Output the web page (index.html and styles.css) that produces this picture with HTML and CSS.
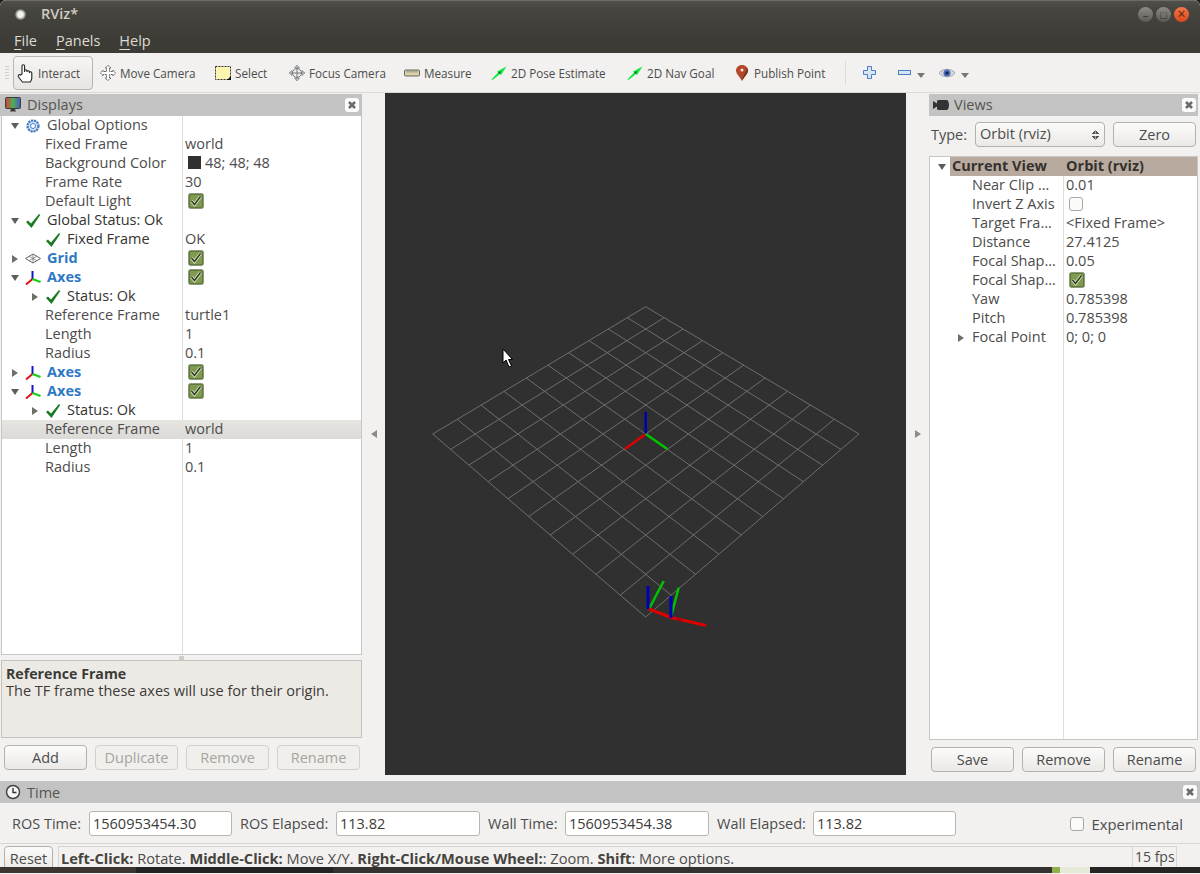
FILE: index.html
```html
<!DOCTYPE html>
<html lang="en">

<head>
    <meta charset="utf-8">
    <title>RViz*</title>
    <link rel="stylesheet" href="styles.css">
</head>

<body>
    <svg class="sprite" width="0" height="0">
        <symbol id="check" viewBox="0 0 16 16">
            <rect x="0.500" y="0.500" width="15" height="15" rx="2" fill="#5f7a3a" stroke="#8f9a7c" />
            <rect x="2" y="2" width="12" height="12" rx="1" fill="#7f9b50" />
            <path d="M3.500 8l3 3.500 6-8" fill="none" stroke="#e6edd4" stroke-width="3" />
            <path d="M3.500 8l3 3.500 6-8" fill="none" stroke="#2f3b22" stroke-width="1.600" />
        </symbol>
        <symbol id="ok" viewBox="0 0 16 16">
            <path d="M1 9l2-1.500 3 3L14 1l1.200 1L6.500 15z" fill="#1d7a24" />
        </symbol>
        <symbol id="axes" viewBox="0 0 16 16">
            <path d="M7.500 9V1" stroke="#1414c8" stroke-width="2" />
            <path d="M7.500 9L1 14.500" stroke="#e01010" stroke-width="2" />
            <path d="M7.500 9L15.500 12" stroke="#10d010" stroke-width="2" />
        </symbol>
        <symbol id="close" viewBox="0 0 14 14">
            <rect width="14" height="14" rx="3" fill="#fbfbfa" />
            <path d="M4 4l6 6M10 4l-6 6" stroke="#6a6a6a" stroke-width="2.600" />
        </symbol>
        <symbol id="twist-open" viewBox="0 0 10 10">
            <path d="M1 2h8L5 8z" fill="#5d5d5a" />
        </symbol>
        <symbol id="twist-closed" viewBox="0 0 10 10">
            <path d="M2 1v8l6-4z" fill="#6e6e6a" />
        </symbol>
        <symbol id="green-arrow" viewBox="0 0 16 14">
            <path d="M0.500 13.500L7 6.500 6 5.500 15.500 0.500 10 9 9 8 1.500 14z" fill="#10e840" />
            <path d="M7 6.500l2 1.500 1-3z" fill="#14602a" />
        </symbol>
        <symbol id="drop" viewBox="0 0 10 10">
            <path d="M1 2h8L5 7z" fill="#777" />
        </symbol>
    </svg>

    <div class="window">
        <header class="titlebar">
            <div class="title-row">
                <span class="app-dot"></span>
                <span class="app-name">RViz*</span>
                <div class="win-buttons">
                    <span class="win-btn">&#8211;</span>
                    <span class="win-btn">&#9633;</span>
                    <span class="win-btn win-close">&#215;</span>
                </div>
            </div>
            <nav class="menubar">
                <span><u>F</u>ile</span>
                <span><u>P</u>anels</span>
                <span><u>H</u>elp</span>
            </nav>
        </header>

        <div class="toolbar">
            <span class="grip"></span>
            <div class="tool tool-active">
                <svg class="tool-icon" viewBox="0 0 18 20" width="18" height="20">
                    <path d="M5 11V3a1.300 1.300 0 0 1 2.600 0v6-1a1.200 1.200 0 0 1 2.400 0v1a1.200 1.200 0 0 1 2.400 0v1a1.200 1.200 0 0 1 2.400 0v5c0 2-.6 3-1.600 4H5.500L1.500 14c-1-1.500.5-3 2-2z" fill="#fff" stroke="#222" stroke-width="1.100" />
                </svg>
                Interact
            </div>
            <div class="tool">
                <svg class="tool-icon" viewBox="0 0 16 16" width="16" height="16">
                    <path d="M8 .5L11 3H9.500v3.500H13V5l2.500 3L13 11V9.500H9.500V13H11l-3 2.500L5 13h1.500V9.500H3V11L.5 8 3 5v1.500h3.500V3H5z" fill="#fff" stroke="#666" stroke-width="1" stroke-dasharray="2 .6" />
                </svg>
                Move Camera
            </div>
            <div class="tool">
                <svg class="tool-icon" viewBox="0 0 16 16" width="16" height="16">
                    <rect x="0.500" y="1.500" width="15" height="13" fill="#fbf5b0" stroke="#333" stroke-dasharray="2 1" />
                    <path d="M16 11v4h-4z" fill="#111" />
                </svg>
                Select
            </div>
            <div class="tool">
                <svg class="tool-icon" viewBox="0 0 16 16" width="16" height="16">
                    <path d="M8 0l2.500 3h-5zM8 16l-2.500-3h5zM0 8l3-2.500v5zM16 8l-3 2.500v-5z" fill="#bbb" stroke="#777" stroke-width=".6" />
                    <circle cx="8" cy="8" r="4.500" fill="#eee" stroke="#777" />
                    <path d="M8 3v10M3 8h10" stroke="#777" />
                </svg>
                Focus Camera
            </div>
            <div class="tool">
                <svg class="tool-icon" viewBox="0 0 16 16" width="16" height="16">
                    <rect x="0.500" y="5" width="15" height="6" rx="1" fill="#d9d3a6" stroke="#666" />
                    <path d="M3 5.500v2M5 5.500v2M7 5.500v2M9 5.500v2M11 5.500v2M13 5.500v2" stroke="#666" stroke-width=".7" />
                </svg>
                Measure
            </div>
            <div class="tool">
                <svg class="tool-icon" width="16" height="14"><use href="#green-arrow" /></svg>
                2D Pose Estimate
            </div>
            <div class="tool">
                <svg class="tool-icon" width="16" height="14"><use href="#green-arrow" /></svg>
                2D Nav Goal
            </div>
            <div class="tool tool-pin">
                <svg class="tool-icon" viewBox="0 0 12 16" width="12" height="16">
                    <path d="M6 0C2.500 0 0 2.500 0 5.500 0 9 4 12 6 16c2-4 6-7 6-10.500C12 2.500 9.500 0 6 0z" fill="#b4482a" />
                    <path d="M6 16c2-4 6-7 6-10.500 0-1-.3-2-.8-2.800C10 7 7 10 6 16z" fill="#6f3a22" />
                    <circle cx="6" cy="5" r="1.500" fill="#f3e6da" />
                </svg>
                Publish Point
            </div>
            <span class="tool-sep"></span>
            <div class="tool tool-small">
                <svg viewBox="0 0 13 13" width="13" height="13">
                    <path d="M4.500.5h4v4h4v4h-4v4h-4v-4h-4v-4h4z" fill="#d7e4f5" stroke="#4a7fc4" />
                </svg>
            </div>
            <div class="tool tool-small">
                <svg viewBox="0 0 13 13" width="13" height="13">
                    <rect x="0.500" y="4.500" width="12" height="4" fill="#d7e4f5" stroke="#4a7fc4" />
                </svg>
                <svg class="drop" width="10" height="10"><use href="#drop" /></svg>
            </div>
            <div class="tool tool-small">
                <svg viewBox="0 0 16 12" width="16" height="12">
                    <path d="M0 6c3-5 13-5 16 0-3 5-13 5-16 0z" fill="#d5d8de" stroke="#8d9098" stroke-width=".7" />
                    <circle cx="8" cy="6" r="3.500" fill="#4a6db5" />
                    <circle cx="8" cy="6" r="1.500" fill="#10204a" />
                </svg>
                <svg class="drop" width="10" height="10"><use href="#drop" /></svg>
            </div>
        </div>

        <main class="workspace">
            <section class="panel panel-displays">
                <div class="panel-head">
                    <svg class="head-icon" viewBox="0 0 16 16" width="16" height="16">
                        <defs>
                            <linearGradient id="screen" x1="0" x2="1" y1="0" y2="0">
                                <stop offset="0" stop-color="#d83a3a" />
                                <stop offset=".5" stop-color="#4fb04f" />
                                <stop offset="1" stop-color="#4a55c8" />
                            </linearGradient>
                        </defs>
                        <rect x="0.500" y="0.500" width="15" height="11" rx="1" fill="url(#screen)" stroke="#3c3c3c" />
                        <path d="M6 12h4l1 2.500H5z" fill="#3c3c3c" />
                    </svg>
                    <span>Displays</span>
                    <svg class="head-close" width="14" height="14"><use href="#close" /></svg>
                </div>

                <div class="tree tree-displays">
                    <div class="row d0"><span class="tw"><svg width="10" height="10"><use href="#twist-open" /></svg></span>
                        <svg class="ic" viewBox="0 0 16 16" width="16" height="16">
                            <circle cx="8" cy="8" r="5.500" fill="#dbe7f7" stroke="#3f78c8" stroke-width="2.200" stroke-dasharray="2.200 .7" />
                            <circle cx="8" cy="8" r="2.500" fill="#fff" stroke="#3f78c8" />
                        </svg>
                        <span class="name">Global Options</span>
                    </div>
                    <div class="row prop"><span class="name">Fixed Frame</span><span class="val">world</span></div>
                    <div class="row prop"><span class="name">Background Color</span><span class="val val-color"><i class="swatch"></i>48; 48; 48</span></div>
                    <div class="row prop"><span class="name">Frame Rate</span><span class="val">30</span></div>
                    <div class="row prop"><span class="name">Default Light</span><span class="val"><svg class="cb" width="16" height="16"><use href="#check" /></svg></span></div>
                    <div class="row d0"><span class="tw"><svg width="10" height="10"><use href="#twist-open" /></svg></span>
                        <svg class="ic" width="16" height="16"><use href="#ok" /></svg>
                        <span class="name dark">Global Status: Ok</span>
                    </div>
                    <div class="row d1"><span class="tw"></span>
                        <svg class="ic" width="16" height="16"><use href="#ok" /></svg>
                        <span class="name dark">Fixed Frame</span><span class="val">OK</span>
                    </div>
                    <div class="row d0"><span class="tw"><svg width="10" height="10"><use href="#twist-closed" /></svg></span>
                        <svg class="ic" viewBox="0 0 16 16" width="16" height="16">
                            <path d="M.5 7.500L8 3l7.500 4.500L8 12z" fill="none" stroke="#666" />
                            <path d="M4.200 5.300l7.500 4.400M11.800 5.300L4.200 9.700M8 3v9" stroke="#666" stroke-width=".7" />
                        </svg>
                        <span class="name blue">Grid</span><span class="val"><svg class="cb" width="16" height="16"><use href="#check" /></svg></span>
                    </div>
                    <div class="row d0"><span class="tw"><svg width="10" height="10"><use href="#twist-open" /></svg></span>
                        <svg class="ic" width="16" height="16"><use href="#axes" /></svg>
                        <span class="name blue">Axes</span><span class="val"><svg class="cb" width="16" height="16"><use href="#check" /></svg></span>
                    </div>
                    <div class="row d1"><span class="tw"><svg width="10" height="10"><use href="#twist-closed" /></svg></span>
                        <svg class="ic" width="16" height="16"><use href="#ok" /></svg>
                        <span class="name dark">Status: Ok</span>
                    </div>
                    <div class="row prop"><span class="name">Reference Frame</span><span class="val">turtle1</span></div>
                    <div class="row prop"><span class="name">Length</span><span class="val">1</span></div>
                    <div class="row prop"><span class="name">Radius</span><span class="val">0.1</span></div>
                    <div class="row d0"><span class="tw"><svg width="10" height="10"><use href="#twist-closed" /></svg></span>
                        <svg class="ic" width="16" height="16"><use href="#axes" /></svg>
                        <span class="name blue">Axes</span><span class="val"><svg class="cb" width="16" height="16"><use href="#check" /></svg></span>
                    </div>
                    <div class="row d0"><span class="tw"><svg width="10" height="10"><use href="#twist-open" /></svg></span>
                        <svg class="ic" width="16" height="16"><use href="#axes" /></svg>
                        <span class="name blue">Axes</span><span class="val"><svg class="cb" width="16" height="16"><use href="#check" /></svg></span>
                    </div>
                    <div class="row d1"><span class="tw"><svg width="10" height="10"><use href="#twist-closed" /></svg></span>
                        <svg class="ic" width="16" height="16"><use href="#ok" /></svg>
                        <span class="name dark">Status: Ok</span>
                    </div>
                    <div class="row prop selected"><span class="name">Reference Frame</span><span class="val">world</span></div>
                    <div class="row prop"><span class="name">Length</span><span class="val">1</span></div>
                    <div class="row prop"><span class="name">Radius</span><span class="val">0.1</span></div>
                </div>

                <div class="sash"></div>

                <div class="descr">
                    <b>Reference Frame</b>
                    <p>The TF frame these axes will use for their origin.</p>
                </div>

                <div class="btn-row btn-row-left">
                    <button class="btn">Add</button>
                    <button class="btn" disabled>Duplicate</button>
                    <button class="btn" disabled>Remove</button>
                    <button class="btn" disabled>Rename</button>
                </div>
            </section>

            <div class="splitter"><i class="arrow-left"></i></div>

            <section class="viewport">
                <svg class="scene" viewBox="385 93 521 682" width="521" height="682">
                    <!-- grid, 10 x 10 cells in perspective -->
                    <path class="grid" d="M645.700 306.700L859 434 645.700 617 432.700 434z
                        M664.100 317.700L450.500 449.300M683 329L468.900 465.100M702.500 340.600L488.100 481.600M722.700 352.700L508 498.700M743.600 365.100L528.700 516.500
                        M765.100 378L550.200 535M787.400 391.300L572.600 554.200M810.400 405L596 574.300M834.300 419.200L620.300 595.200
                        M627.300 317.700L840.900 449.300M608.400 329L822.500 465.100M588.900 340.600L803.300 481.600M568.700 352.700L783.400 498.700M547.800 365.100L762.700 516.500
                        M526.300 378L741.200 535M504 391.300L718.800 554.200M481 405L695.400 574.300M457.100 419.200L671.100 595.200" />
                    <!-- fixed frame axes -->
                    <path class="ax ax-z" d="M645.700 434V412" />
                    <path class="ax ax-x" d="M645.700 434L625 449" />
                    <path class="ax ax-y" d="M645.700 434L667.300 449" />
                    <!-- turtle axes -->
                    <path class="ax ax-y" d="M649 609L663.700 581" />
                    <path class="ax ax-z ax-fat" d="M648 609V586" />
                    <path class="ax ax-y" d="M671 617L678.700 587.500" />
                    <path class="ax ax-x ax-fat" d="M649 609L671 617.500 680 619.500 706 625.500" />
                    <path class="ax ax-z ax-fat" d="M671 618V596" />
                    <path d="M676 618l5 1-1 4z" fill="#8a1010" />
                    <!-- mouse pointer -->
                    <path d="M503 349v14l3-3 3 7 2.500-1-3-6.500h4z" fill="#fff" stroke="#000" stroke-width="1" />
                </svg>
            </section>

            <div class="splitter"><i class="arrow-right"></i></div>

            <section class="panel panel-views">
                <div class="panel-head">
                    <svg class="head-icon" viewBox="0 0 16 10" width="16" height="10">
                        <path d="M0 1l4 2.500V1.500c0-.8.700-1.500 1.500-1.500h8C15 0 16 2 16 5s-1 5-2.500 5h-8C4.700 10 4 9.300 4 8.500V6.500L0 9z" fill="#333" />
                    </svg>
                    <span>Views</span>
                    <svg class="head-close" width="14" height="14"><use href="#close" /></svg>
                </div>
                <div class="type-row">
                    <label>Type:</label>
                    <div class="combo">Orbit (rviz)<i class="updown"></i></div>
                    <button class="btn">Zero</button>
                </div>
                <div class="tree tree-views">
                    <div class="row current"><span class="tw"><svg width="10" height="10"><use href="#twist-open" /></svg></span>
                        <span class="name">Current View</span><span class="val">Orbit (rviz)</span>
                    </div>
                    <div class="row prop"><span class="name">Near Clip &#8230;</span><span class="val">0.01</span></div>
                    <div class="row prop"><span class="name">Invert Z Axis</span><span class="val"><i class="box"></i></span></div>
                    <div class="row prop"><span class="name">Target Fra&#8230;</span><span class="val">&lt;Fixed Frame&gt;</span></div>
                    <div class="row prop"><span class="name">Distance</span><span class="val">27.4125</span></div>
                    <div class="row prop"><span class="name">Focal Shap&#8230;</span><span class="val">0.05</span></div>
                    <div class="row prop"><span class="name">Focal Shap&#8230;</span><span class="val"><svg class="cb" width="16" height="16"><use href="#check" /></svg></span></div>
                    <div class="row prop"><span class="name">Yaw</span><span class="val">0.785398</span></div>
                    <div class="row prop"><span class="name">Pitch</span><span class="val">0.785398</span></div>
                    <div class="row prop prop-twist"><span class="tw"><svg width="10" height="10"><use href="#twist-closed" /></svg></span><span class="name">Focal Point</span><span class="val">0; 0; 0</span></div>
                </div>
                <div class="btn-row btn-row-right">
                    <button class="btn">Save</button>
                    <button class="btn">Remove</button>
                    <button class="btn">Rename</button>
                </div>
            </section>
        </main>

        <section class="time-panel">
            <div class="panel-head time-head">
                <svg class="head-icon" viewBox="0 0 16 16" width="16" height="16">
                    <circle cx="8" cy="8" r="6.500" fill="#f6f6f6" stroke="#444" stroke-width="1.500" />
                    <path d="M8 4v4.500h3.500" fill="none" stroke="#333" stroke-width="1.400" />
                </svg>
                <span>Time</span>
                <svg class="head-close" width="14" height="14"><use href="#close" /></svg>
            </div>
            <div class="time-row">
                <label>ROS Time:</label>
                <div class="field">1560953454.30</div>
                <label>ROS Elapsed:</label>
                <div class="field">113.82</div>
                <label>Wall Time:</label>
                <div class="field">1560953454.38</div>
                <label>Wall Elapsed:</label>
                <div class="field">113.82</div>
                <div class="experimental"><i class="box"></i>Experimental</div>
            </div>
        </section>

        <footer class="statusbar">
            <button class="btn btn-reset">Reset</button>
            <div class="status-text"><b>Left-Click:</b> Rotate. <b>Middle-Click:</b> Move X/Y. <b>Right-Click/Mouse Wheel:</b>: Zoom. <b>Shift</b>: More options.</div>
            <div class="fps">15 fps</div>
        </footer>

        <div class="desktop-strip">
            <span class="strip-a"></span>
            <span class="strip-b"></span>
            <span class="strip-c"></span>
            <span class="strip-d"></span>
        </div>
    </div>
</body>

</html>
```

FILE: styles.css
```css
* {
    box-sizing: border-box;
}

body {
    margin: 0;
    background-color: #1c1c1a;
    font-family: "Open Sans", "Noto Sans", sans-serif;
    font-size: 14.500px;
    color: #4c4c4c;
}

.sprite {
    position: absolute;
}

.window {
    display: flex;
    flex-direction: column;
    width: 1200px;
    height: 874px;
    overflow: hidden;
    background-color: #f2f1ef;
    border-radius: 6px 6px 0 0;
}

/* title and menu */

.titlebar {
    height: 53px;
    background: linear-gradient(#514f4a 0, #47453f 8px, #3c3b36 40px);
    border-top: 1px solid #6d6b64;
    color: #dfdbd2;
}

.title-row {
    display: flex;
    align-items: center;
    height: 26px;
    padding-left: 15px;
}

.app-dot {
    width: 11px;
    height: 11px;
    border-radius: 50%;
    background: radial-gradient(#f2f2f0 35%, #55544f 75%);
}

.app-name {
    margin-left: 15px;
    margin-bottom: 2px;
    font-size: 14.500px;
    font-weight: 600;
    color: #d0ccc4;
}

.win-buttons {
    display: flex;
    gap: 3px;
    margin-left: auto;
    margin-right: 11px;
}

.win-btn {
    display: flex;
    align-items: center;
    justify-content: center;
    width: 15px;
    height: 15px;
    border-radius: 50%;
    background: linear-gradient(#8c8b85, #5b5a55);
    font-size: 11px;
    line-height: 1;
    color: #35342f;
}

.win-close {
    background: linear-gradient(#f2794a, #d9481c);
    color: #5a2410;
    font-size: 14px;
}

.menubar {
    display: flex;
    gap: 19px;
    height: 26px;
    padding-left: 14px;
    line-height: 28px;
    font-size: 14.500px;
}

.menubar u {
    text-underline-offset: 3px;
}

/* toolbar */

.toolbar {
    display: grid;
    grid-template-columns: 13px 87px 115px 74px 115px 87px 136px 109px 109px 18px 35px 41px 50px;
    align-items: center;
    height: 40px;
    background-color: #f2f1ef;
    border-bottom: 1px solid #dbd9d5;
    font-size: 11.700px;
}

.grip {
    width: 4px;
    height: 13px;
    margin-left: 5px;
    background: repeating-linear-gradient(#cfcdc9 0 1px, transparent 1px 3px);
}

.tool {
    display: flex;
    align-items: center;
    gap: 4px;
    height: 34px;
    white-space: nowrap;
}

.tool-active {
    width: 80px;
    padding-left: 3px;
    gap: 3px;
    background: linear-gradient(#f6f5f3, #e7e5e2);
    border: 1px solid #b8b5af;
    border-radius: 4px;
}

.tool-pin {
    gap: 6px;
}

.tool-small {
    gap: 5px;
}

.tool-sep {
    width: 1px;
    height: 24px;
    background-color: #dedcd8;
}

.drop {
    margin-top: 6px;
}

/* main row */

.workspace {
    display: flex;
    flex: none;
    height: 688px;
}

.panel {
    display: flex;
    flex-direction: column;
    flex: none;
    padding-top: 1px;
}

.panel-displays {
    width: 362px;
}

.panel-views {
    width: 269px;
}

.panel-head {
    display: flex;
    align-items: center;
    flex: none;
    height: 22px;
    padding-left: 5px;
    background-color: #c3c3c3;
    font-size: 14.500px;
    color: #55554f;
}

.panel-head span {
    margin-bottom: 2px;
}

.head-icon {
    margin-right: 6px;
}

.head-close {
    margin-left: auto;
    margin-right: 3px;
}

.panel-views .panel-head {
    padding-left: 4px;
}

.panel-views .head-icon {
    margin-right: 5px;
}

.panel-views .head-close {
    margin-right: 2px;
}

.tree {
    flex: none;
    background-color: #fff;
    border: 1px solid #c9c7c3;
    border-top: none;
}

.tree-displays {
    height: 539px;
    margin-left: 1px;
    background: linear-gradient(#dedede, #dedede) 180px 0 / 1px 100% no-repeat #fff;
}

.tree-views {
    height: 584px;
    background: linear-gradient(#dedede, #dedede) 133px 0 / 1px 100% no-repeat #fff;
    border-top: 1px solid #c9c7c3;
}

.row {
    position: relative;
    display: flex;
    align-items: center;
    height: 19px;
    white-space: nowrap;
}

.name,
.val {
    margin-bottom: 2px;
}

.tw {
    display: flex;
    align-items: center;
    justify-content: center;
    flex: none;
    width: 15px;
}

.ic {
    flex: none;
    margin: 0 6px 0 3px;
}

.d0 {
    padding-left: 5px;
}

.d1 {
    padding-left: 25px;
}

.prop {
    padding-left: 43px;
}

.tree-displays .val {
    position: absolute;
    left: 183px;
}

.dark {
    color: #33332f;
}

.blue {
    font-weight: 700;
    color: #2f78c5;
}

.selected {
    background: linear-gradient(#e7e5e2, #dcdad7);
}

.val-color {
    display: flex;
    align-items: center;
}

.swatch {
    width: 13px;
    height: 13px;
    margin: 0 4px 0 3px;
    background-color: #303030;
}

.cb {
    display: block;
    margin-left: 3px;
}

.box {
    display: block;
    width: 14px;
    height: 14px;
    background-color: #fbfbfa;
    border: 1px solid #a8a6a1;
    border-radius: 3px;
}

/* right tree */

.tree-views .prop {
    padding-left: 42px;
}

.tree-views .prop-twist {
    padding-left: 23px;
}

.prop-twist .tw {
    justify-content: flex-start;
    width: 19px;
    padding-left: 3px;
}

.tree-views .val {
    position: absolute;
    left: 136px;
}

.tree-views .box {
    margin-left: 3px;
}

.current {
    padding-left: 4px;
    background: linear-gradient(to right, #fff 20px, #b9aa9f 20px);
    font-weight: 700;
    color: #35322e;
}

.current .name {
    margin-left: 3px;
}

.current .val {
    font-weight: 700;
}

.sash {
    flex: none;
    height: 5px;
    margin-left: 1px;
    background: linear-gradient(#cfcdc9, #cfcdc9) 178px 1px / 5px 4px no-repeat;
}

.descr {
    flex: none;
    height: 78px;
    margin-left: 1px;
    padding: 4px 4px;
    background-color: #edeae5;
    border: 1px solid #c4c2bd;
    line-height: 17px;
    color: #3c3b37;
}

.descr b {
    font-size: 14.200px;
}

.descr p {
    margin: 0;
}

.btn-row {
    display: flex;
    flex: none;
}

.btn-row-left {
    gap: 8px;
    padding: 7px 0 0 4px;
}

.btn-row-right {
    gap: 8px;
    padding: 7px 0 0 2px;
}

.btn {
    width: 83px;
    height: 25px;
    padding: 0;
    background: linear-gradient(#fbfbfa, #ebe9e6);
    border: 1px solid #b4b1ab;
    border-radius: 4px;
    font-family: inherit;
    font-size: 14.500px;
    color: #4c4c4c;
}

.btn:disabled {
    background: #f0efec;
    border-color: #d2d0cb;
    color: #a5a4a0;
}

.splitter {
    display: flex;
    align-items: center;
    justify-content: center;
    flex: none;
    width: 23px;
    padding-bottom: 6px;
}

.arrow-left,
.arrow-right {
    width: 0;
    height: 0;
    border-top: 4px solid transparent;
    border-bottom: 4px solid transparent;
}

.arrow-left {
    border-right: 6px solid #8b8b88;
}

.arrow-right {
    border-left: 6px solid #8b8b88;
}

.viewport {
    flex: none;
    width: 521px;
    height: 682px;
    background-color: #303030;
}

.scene {
    display: block;
}

.grid {
    fill: none;
    stroke: #6e6e6e;
    stroke-width: 1;
}

.ax {
    fill: none;
    stroke-width: 2.500;
}

.ax-fat {
    stroke-width: 3;
}

.ax-x {
    stroke: #dc0000;
}

.ax-y {
    stroke: #00c400;
}

.ax-z {
    stroke: #0000b4;
}

.type-row {
    display: flex;
    align-items: center;
    flex: none;
    height: 25px;
    margin: 6px 0 9px;
}

.type-row label {
    width: 46px;
    padding-left: 2px;
}

.combo {
    position: relative;
    width: 130px;
    height: 25px;
    margin-right: 8px;
    padding-left: 4px;
    background: linear-gradient(#fbfbfa, #ebe9e6);
    border: 1px solid #b4b1ab;
    border-radius: 4px;
    line-height: 21px;
}

.updown {
    position: absolute;
    top: 7px;
    right: 5px;
    width: 7px;
    height: 10px;
    background:
        linear-gradient(135deg, transparent 50%, #555 50%) 0 0 / 3.500px 4px no-repeat,
        linear-gradient(225deg, transparent 50%, #555 50%) 3.500px 0 / 3.500px 4px no-repeat,
        linear-gradient(45deg, transparent 50%, #555 50%) 0 6px / 3.500px 4px no-repeat,
        linear-gradient(315deg, transparent 50%, #555 50%) 3.500px 6px / 3.500px 4px no-repeat;
}

/* time panel */

.time-panel {
    flex: none;
    height: 62px;
}

.time-head {
    height: 22px;
}

.time-head span {
    margin-bottom: 0;
}

.time-row {
    display: grid;
    grid-template-columns: 77px 143px 104px 144px 85px 144px 104px 143px 1fr;
    align-items: center;
    height: 40px;
    padding-left: 12px;
    padding-top: 1px;
}

.time-row label {
    white-space: nowrap;
}

.time-row .field + label {
    padding-left: 8px;
}

.time-row label:first-child {
    padding-left: 0;
}

.field {
    height: 25px;
    padding-left: 3px;
    background-color: #fff;
    border: 1px solid #b9b6b0;
    border-radius: 3px;
    line-height: 23px;
    color: #3c3b37;
}

.experimental {
    display: flex;
    align-items: center;
    justify-content: flex-end;
    gap: 8px;
    padding-right: 17px;
    font-size: 14.800px;
}

/* status bar */

.statusbar {
    display: flex;
    align-items: flex-start;
    flex: none;
    height: 24px;
    padding-left: 4px;
    overflow: hidden;
    border-top: 1px solid #d8d6d2;
}

.btn-reset {
    flex: none;
    width: 49px;
    height: 25px;
    margin-top: 2px;
}

.status-text {
    flex: none;
    width: 1074px;
    height: 24px;
    margin-top: 2px;
    margin-left: 5px;
    padding: 2px 0 0 2px;
    border-left: 1px solid #d8d6d2;
    border-top: 1px solid #d8d6d2;
    white-space: nowrap;
    line-height: 19px;
    font-size: 14.600px;
}

.status-text b {
    color: #45443f;
}

.fps {
    flex: none;
    width: 45px;
    height: 24px;
    margin-top: 2px;
    padding: 0 0 0 2px;
    border: 1px solid #d8d6d2;
    border-bottom: none;
    line-height: 20px;
    font-size: 14px;
}

.desktop-strip {
    display: flex;
    flex: none;
    height: 6px;
    background-color: #262523;
}

.strip-a {
    width: 136px;
    background-color: #3a352f;
}

.strip-b {
    width: 197px;
    background-color: #232323;
}

.strip-c {
    width: 719px;
    background-color: #34322f;
}

.strip-d {
    width: 38px;
    background: linear-gradient(to right, #8fb04a 8px, #e6ebd8 8px);
}
```
